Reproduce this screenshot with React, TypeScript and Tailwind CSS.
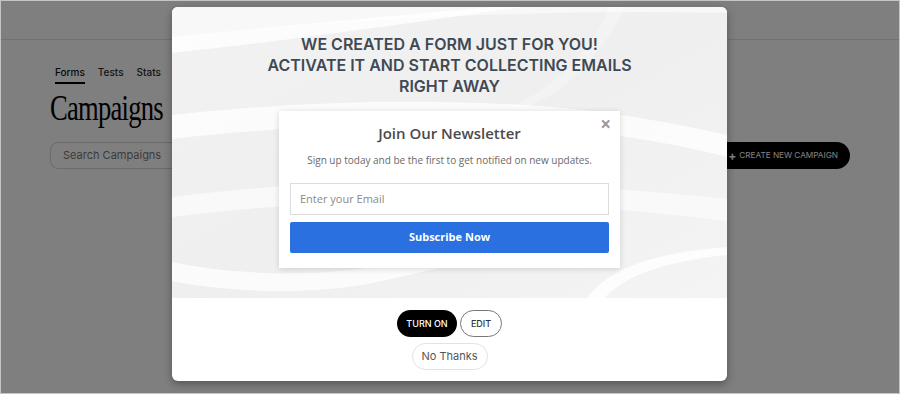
import React from "react";

const WavyBg = () => (
  <svg
    className="absolute inset-0 h-full w-full"
    viewBox="0 0 555 291"
    preserveAspectRatio="none"
  >
    <defs>
      <linearGradient id="bgGrad" x1="0" y1="0" x2="1" y2="1">
        <stop offset="0" stopColor="#f2f2f2" />
        <stop offset="0.5" stopColor="#efefef" />
        <stop offset="1" stopColor="#f4f4f4" />
      </linearGradient>
    </defs>
    <rect width="555" height="291" fill="url(#bgGrad)" />
    <path d="M0 0 L555 0 L555 6 C380 2 200 10 0 30 Z" fill="#f8f8f8" />
    <path d="M0 30 C120 18 230 8 320 0 L350 0 C250 14 130 32 0 46 Z" fill="#ffffff" opacity="0.8" />
    <path d="M0 108 C140 92 300 90 420 104 C480 112 520 120 555 128 L555 150 C500 136 450 128 400 124 C280 112 140 116 0 132 Z" fill="#ffffff" opacity="0.75" />
    <path d="M0 190 C150 172 300 165 555 192 L555 214 C330 186 160 190 0 210 Z" fill="#f9f9f9" />
    <path d="M0 255 C60 268 140 270 200 260 C260 250 300 240 380 236 L380 244 C300 250 260 264 200 276 C140 288 60 286 0 274 Z" fill="#ffffff" opacity="0.75" />
    <path d="M415 291 C435 265 470 247 555 240 L555 248 C480 256 452 272 432 291 Z" fill="#ffffff" opacity="0.8" />
    <path d="M455 0 C430 40 405 80 355 100 L338 100 C390 78 418 40 438 0 Z" fill="#ffffff" opacity="0.25" />
  </svg>
);

const App = () => {
  return (
    <div
      className="relative h-[394px] w-[900px] overflow-hidden border border-[#c4c4c4] bg-white"
      style={{ fontFamily: "Inter, 'Liberation Sans', sans-serif" }}
    >
      {/* Page behind the overlay */}
      <div className="h-[39px] border-b border-[#e2e2e2]" />
      <div className="px-[49px]">
        <div className="flex gap-[13px] pl-[5px] pt-[25px] text-[10px] font-medium text-[#2b2b2b]">
          <div className="flex flex-col items-center">
            <span className="leading-[14px] text-[#111]">Forms</span>
            <span className="mt-[3px] h-[2px] w-full bg-black" />
          </div>
          <span className="leading-[14px]">Tests</span>
          <span className="leading-[14px]">Stats</span>
        </div>
        <h1
          className="mt-[4px] origin-left scale-x-[0.76] text-[35px] leading-[42px] tracking-[-1px] text-black"
          style={{ fontFamily: "'Liberation Serif', serif" }}
        >
          Campaigns
        </h1>
        <div className="mt-[12px] flex items-center justify-between">
          <div className="flex h-[27px] w-[300px] items-center rounded-lg border border-[#d6d6d6] px-3 text-[11px] text-[#777]">
            Search Campaigns
          </div>
          <div className="flex h-[27px] items-center gap-[3px] rounded-full bg-black pl-[13px] pr-[12px] text-[8.2px] text-white">
            <span className="text-[12px] font-bold leading-none">+</span>
            CREATE NEW CAMPAIGN
          </div>
        </div>
      </div>

      {/* Overlay */}
      <div className="absolute inset-0 bg-black/50" />

      {/* Modal */}
      <div className="absolute left-[171px] top-[6px] w-[555px] overflow-hidden rounded-md bg-white shadow-[0_3px_8px_rgba(0,0,0,0.35)]">
        <div className="relative flex h-[291px] flex-col items-center pt-[27px]">
          <WavyBg />
          <h2 className="relative text-center text-[16px] font-semibold leading-[21px] text-[#3f4954]">
            WE CREATED A FORM JUST FOR YOU!
            <br />
            ACTIVATE IT AND START COLLECTING EMAILS
            <br />
            RIGHT AWAY
          </h2>
          <div
            className="relative mt-[14px] w-[341px] bg-white px-[11px] pb-[15px] pt-[12px] shadow-[0_1px_6px_rgba(0,0,0,0.15)]"
            style={{ fontFamily: "'Open Sans', sans-serif" }}
          >
            <span className="absolute right-[9px] top-[3px] text-[19px] font-bold leading-[20px] text-[#9a9a9a]">
              ×
            </span>
            <div className="text-center text-[15px] font-semibold leading-[20px] text-[#4b4b4b]">
              Join Our Newsletter
            </div>
            <div className="mt-[9px] text-center text-[10px] leading-[16px] text-[#6a6a6a]">
              Sign up today and be the first to get notified on new updates.
            </div>
            <div className="mt-[15px] flex h-[32px] items-center border border-[#dcdcdc] px-[9px] text-[11px] text-[#8a8a8a]">
              Enter your Email
            </div>
            <div className="mt-[7px] flex h-[31px] items-center justify-center rounded-[2px] bg-[#2b70e0] text-[11px] font-bold text-white">
              Subscribe Now
            </div>
          </div>
        </div>
        <div className="flex flex-col items-center pb-[11px] pt-[12px]">
          <div className="flex gap-[3px]">
            <div className="flex h-[27px] w-[60px] items-center justify-center rounded-full bg-black text-[9px] font-medium text-white">
              TURN ON
            </div>
            <div className="flex h-[27px] w-[42px] items-center justify-center rounded-full border border-[#777] text-[9px] font-medium text-[#333]">
              EDIT
            </div>
          </div>
          <div className="mt-[6px] flex h-[27px] w-[76px] items-center justify-center rounded-full border border-[#e2e2e2] text-[11px] text-[#555]">
            No Thanks
          </div>
        </div>
      </div>
    </div>
  );
};

export default App;
